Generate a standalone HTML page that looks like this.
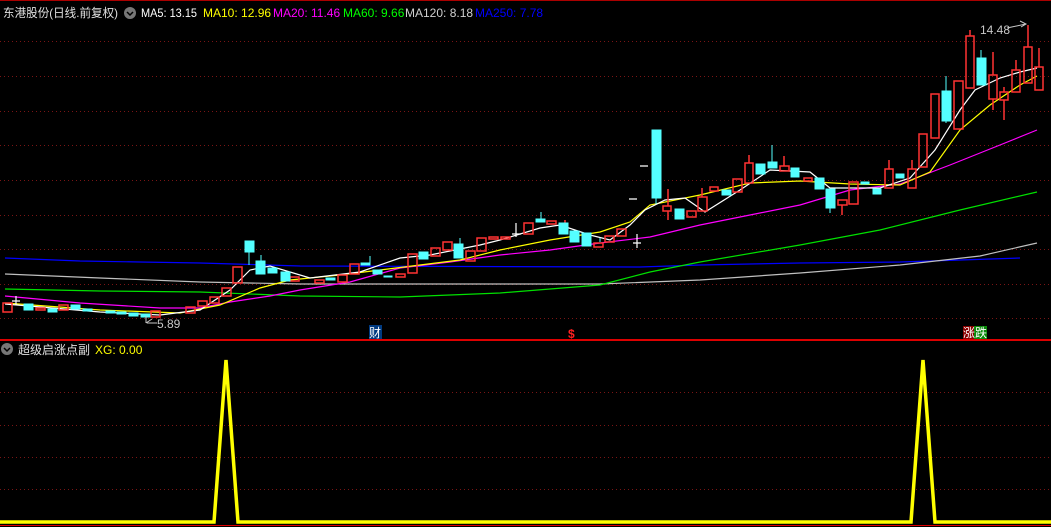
<!DOCTYPE html>
<html><head><meta charset="utf-8"><style>
html,body{margin:0;padding:0;background:#000;width:1051px;height:527px;overflow:hidden}
svg{display:block}
text{font-family:"Liberation Sans","Noto Sans CJK SC",sans-serif;font-size:12px}
</style></head><body>
<svg width="1051" height="527" viewBox="0 0 1051 527">
<rect width="1051" height="527" fill="#000"/>
<line x1="0" y1="0.5" x2="1051" y2="0.5" stroke="#a00" stroke-width="1"/>
<g stroke="#7a1515" stroke-dasharray="1 3" stroke-width="1">
<line x1="0" y1="41.5" x2="1051" y2="41.5"/><line x1="0" y1="76.5" x2="1051" y2="76.5"/>
<line x1="0" y1="111.5" x2="1051" y2="111.5"/><line x1="0" y1="145.5" x2="1051" y2="145.5"/>
<line x1="0" y1="180.5" x2="1051" y2="180.5"/><line x1="0" y1="215.5" x2="1051" y2="215.5"/>
<line x1="0" y1="249.5" x2="1051" y2="249.5"/><line x1="0" y1="284.5" x2="1051" y2="284.5"/>
<line x1="0" y1="318.5" x2="1051" y2="318.5"/>
<line x1="0" y1="392.5" x2="1051" y2="392.5"/><line x1="0" y1="425.5" x2="1051" y2="425.5"/>
<line x1="0" y1="457.5" x2="1051" y2="457.5"/><line x1="0" y1="489.5" x2="1051" y2="489.5"/>
</g>
<line x1="0" y1="340" x2="1051" y2="340" stroke="#d00" stroke-width="2"/>
<line x1="0" y1="525.5" x2="1051" y2="525.5" stroke="#d00" stroke-width="1"/>
<g fill="none" stroke-width="1.2">
<polyline stroke="#0000ff" points="5,258 80,261 140,262 200,263 300,266 640,267 700,265 800,263 900,262 1020,258"/>
<polyline stroke="#c0c0c0" points="5,274 100,278 200,282 300,284 600,284 700,280 800,273 900,265 980,256 1037,243"/>
<polyline stroke="#00e000" points="5,289 100,291 200,292 300,296 400,297 500,293 600,285 650,272 700,262 800,245 880,230 960,210 1037,192"/>
<polyline stroke="#ff00ff" points="5,296 80,303 160,308 200,308 230,302 270,296 300,290 350,282 400,268 450,262 500,255 550,250 600,243 650,237 700,225 750,215 800,205 850,190 900,184 950,165 1000,145 1037,130"/>
<polyline stroke="#ffff00" points="5,303 100,310 180,313 220,305 260,288 290,280 340,275 380,270 420,265 460,260 500,250 550,240 600,232 630,222 650,205 700,195 750,183 800,181 850,184 900,185 930,172 960,130 990,105 1020,85 1037,76"/>
<polyline stroke="#ffffff" points="5,304 100,312 160,315 200,310 230,290 250,270 270,266 290,272 310,278 360,272 400,258 430,255 480,245 500,240 540,228 560,225 590,235 610,240 630,225 645,210 665,200 685,198 705,212 740,190 770,170 810,172 830,188 880,188 910,178 935,150 960,110 975,90 1000,78 1020,72 1037,68"/>
</g>
<g stroke="#ff3232" fill="none" stroke-width="1.5">
<rect x="3" y="303" width="9" height="9"/><rect x="36" y="308" width="9" height="2"/>
<rect x="59" y="305" width="9" height="5"/><rect x="151" y="311" width="9" height="6"/>
<rect x="186" y="307" width="9" height="6"/><rect x="198" y="301" width="9" height="5"/>
<rect x="210" y="297" width="9" height="6"/><rect x="222" y="288" width="9" height="8"/>
<rect x="233" y="267" width="9" height="16"/><rect x="290" y="277" width="9" height="4"/>
<rect x="315" y="280" width="9" height="3"/><rect x="338" y="275" width="9" height="7"/>
<rect x="350" y="264" width="9" height="10"/><rect x="396" y="274" width="9" height="3"/>
<rect x="408" y="254" width="9" height="19"/><rect x="431" y="248" width="9" height="8"/>
<rect x="443" y="242" width="9" height="8"/><rect x="466" y="251" width="9" height="10"/>
<rect x="477" y="238" width="9" height="13"/><rect x="489" y="237" width="9" height="2"/>
<rect x="501" y="237" width="9" height="2"/><rect x="524" y="223" width="9" height="11"/>
<rect x="547" y="221" width="9" height="3"/><rect x="594" y="243" width="9" height="4"/>
<rect x="605" y="236" width="9" height="6"/><rect x="617" y="229" width="9" height="7"/>
<rect x="663" y="206" width="8" height="5"/><rect x="687" y="211" width="9" height="6"/>
<rect x="698" y="197" width="9" height="14"/><rect x="710" y="187" width="8" height="4"/>
<rect x="733" y="179" width="9" height="13"/><rect x="745" y="163" width="8" height="20"/>
<rect x="780" y="166" width="9" height="5"/><rect x="804" y="178" width="8" height="3"/>
<rect x="838" y="200" width="9" height="5"/><rect x="849" y="182" width="9" height="22"/>
<rect x="885" y="169" width="8" height="19"/><rect x="908" y="169" width="8" height="19"/>
<rect x="919" y="134" width="8" height="33"/><rect x="931" y="94" width="8" height="44"/>
<rect x="954" y="81" width="9" height="48"/><rect x="966" y="36" width="8" height="52"/>
<rect x="989" y="75" width="8" height="24"/><rect x="1000" y="92" width="8" height="8"/>
<rect x="1012" y="70" width="8" height="22"/><rect x="1024" y="47" width="8" height="36"/>
<rect x="1035" y="67" width="8" height="23"/>
<path d="M668 189V206M668 211V220M702 188V197M749 155V163M784 156V166M842 205V215M889 160V169M912 160V169M993 52V75M993 99V110M1004 87V92M1004 100V120M1028 25V47M1039 48V67M1016 60V70M565 220V226M970 30V36"/>
</g>
<g fill="#54ffff" stroke="#54ffff" stroke-width="1">
<rect x="24" y="304" width="9" height="6"/><rect x="48" y="309" width="9" height="3"/>
<rect x="71" y="305" width="9" height="4"/><rect x="83" y="309" width="9" height="2"/>
<rect x="106" y="311" width="9" height="2"/><rect x="117" y="312" width="9" height="2"/>
<rect x="129" y="313" width="9" height="3"/><rect x="141" y="314" width="9" height="3"/>
<rect x="245" y="241" width="9" height="11"/><rect x="256" y="261" width="9" height="13"/>
<rect x="268" y="268" width="9" height="5"/><rect x="281" y="272" width="9" height="9"/>
<rect x="326" y="278" width="9" height="2"/><rect x="361" y="263" width="9" height="2"/>
<rect x="373" y="270" width="9" height="4"/><rect x="384" y="276" width="8" height="1"/>
<rect x="419" y="252" width="9" height="7"/><rect x="454" y="244" width="9" height="14"/>
<rect x="536" y="219" width="9" height="3"/><rect x="559" y="223" width="9" height="11"/>
<rect x="570" y="231" width="9" height="11"/><rect x="582" y="233" width="9" height="13"/>
<rect x="652" y="130" width="9" height="68"/><rect x="675" y="209" width="9" height="10"/>
<rect x="722" y="190" width="9" height="5"/><rect x="756" y="164" width="9" height="10"/>
<rect x="768" y="162" width="9" height="6"/><rect x="791" y="168" width="8" height="9"/>
<rect x="815" y="178" width="9" height="11"/><rect x="826" y="189" width="9" height="19"/>
<rect x="861" y="182" width="8" height="2"/><rect x="873" y="189" width="8" height="5"/>
<rect x="896" y="174" width="8" height="4"/><rect x="942" y="91" width="9" height="30"/>
<rect x="977" y="58" width="9" height="27"/>
<path d="M249 252V265M656 198V204M772 145V162M946 76V91M946 121V123M981 50V58M830 208V213M541 212V219M600 238V242M261 255V261M460 238V244M370 256V263"/>
</g>
<g stroke="#fff" stroke-width="1.2">
<path d="M512 234H521M516 223V237M629 199H637M640 166H648M633 243H641M637 234V248M12 301H20M16 296V305"/>
</g>
<text x="980" y="34" fill="#c8c8c8">14.48</text>
<path d="M1007 28L1026 24M1020 21L1026 24L1021 27" stroke="#c8c8c8" fill="none"/>
<text x="157" y="328" fill="#c8c8c8">5.89</text>
<path d="M157 323H147M146 323L152 319M146 323V316" stroke="#c8c8c8" fill="none"/>
<rect x="369" y="325" width="13" height="14" fill="#003a80"/>
<text x="369" y="337" fill="#fff">财</text>
<text x="568" y="338" fill="#ff2020" font-weight="bold">$</text>
<rect x="963" y="326" width="11" height="13" fill="#8b0000"/>
<rect x="974" y="326" width="13" height="13" fill="#0a8a0a"/>
<text x="963" y="337" fill="#fff">涨跌</text>
<text x="3" y="17" fill="#e0e0e0" textLength="115" lengthAdjust="spacingAndGlyphs">东港股份(日线.前复权)</text>
<circle cx="130" cy="13" r="6" fill="#777"/><path d="M127 12L130 15L133 12" stroke="#000" stroke-width="1.5" fill="none"/>
<text x="141" y="17" fill="#fff" textLength="56" lengthAdjust="spacingAndGlyphs">MA5: 13.15</text>
<text x="203" y="17" fill="#ffff00">MA10: 12.96</text>
<text x="273" y="17" fill="#ff00ff">MA20: 11.46</text>
<text x="343" y="17" fill="#00ff00">MA60: 9.66</text>
<text x="405" y="17" fill="#d0d0d0">MA120: 8.18</text>
<text x="475" y="17" fill="#0000ff">MA250: 7.78</text>
<circle cx="7" cy="349" r="6" fill="#777"/><path d="M4 348L7 351L10 348" stroke="#000" stroke-width="1.5" fill="none"/>
<text x="18" y="354" fill="#e0e0e0">超级启涨点副</text>
<text x="95" y="354" fill="#ffff00">XG: 0.00</text>
<polyline points="0,522 214,522 226,360 238,522 911,522 923,360 935,522 1051,522" fill="none" stroke="#ffff00" stroke-width="3.5"/>
</svg>
</body></html>
